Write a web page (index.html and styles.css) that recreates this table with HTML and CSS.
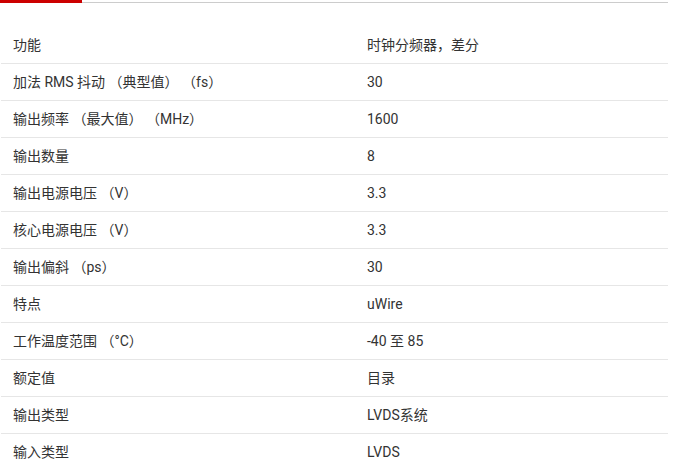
FILE: index.html
```html
<!DOCTYPE html>
<html lang="zh">
<head>
<meta charset="utf-8">
<link rel="stylesheet" href="styles.css">
</head>
<body>
<div class="page">
  <div class="tabs">
    <div class="tab-active"></div>
    <div class="tab-rest"></div>
  </div>
  <div class="specs">
    <div class="row"><div class="k">功能</div><div class="v">时钟分频器，差分</div></div>
    <div class="row"><div class="k">加法 RMS 抖动 （典型值） （fs）</div><div class="v">30</div></div>
    <div class="row"><div class="k">输出频率 （最大值） （MHz）</div><div class="v">1600</div></div>
    <div class="row"><div class="k">输出数量</div><div class="v">8</div></div>
    <div class="row"><div class="k">输出电源电压 （V）</div><div class="v">3.3</div></div>
    <div class="row"><div class="k">核心电源电压 （V）</div><div class="v">3.3</div></div>
    <div class="row"><div class="k">输出偏斜 （ps）</div><div class="v">30</div></div>
    <div class="row"><div class="k">特点</div><div class="v">uWire</div></div>
    <div class="row"><div class="k">工作温度范围 （°C）</div><div class="v">-40 至 85</div></div>
    <div class="row"><div class="k">额定值</div><div class="v">目录</div></div>
    <div class="row"><div class="k">输出类型</div><div class="v">LVDS系统</div></div>
    <div class="row"><div class="k">输入类型</div><div class="v">LVDS</div></div>
  </div>
</div>
</body>
</html>
```

FILE: styles.css
```css
html, body {
  margin: 0;
  padding: 0;
  background: #fff;
}
body {
  font-family: Roboto, "Noto Sans CJK SC", sans-serif;
  font-size: 14px;
  color: #333;
  text-spacing-trim: space-all;
}
.page {
  width: 668px;
}
.tabs {
  display: flex;
  height: 3px;
}
.tab-active {
  width: 82px;
  height: 3px;
  background: #cc0000;
}
.tab-rest {
  flex: 1;
  height: 2px;
  border-bottom: 1px solid #cccccc;
}
.specs {
  padding-top: 24px;
  margin-left: 1px;
}
.row {
  display: grid;
  grid-template-columns: 354px 1fr;
  height: 36px;
  align-items: center;
  border-bottom: 1px solid #e6e6e6;
  padding-left: 12px;
}
.k, .v {
  line-height: 16px;
  white-space: nowrap;
}
```
